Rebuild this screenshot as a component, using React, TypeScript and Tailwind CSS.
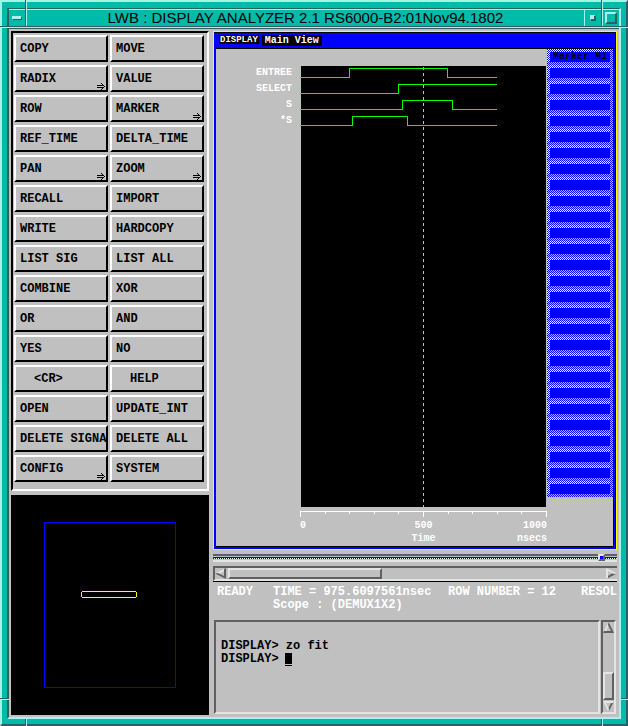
import type { ReactNode } from "react";
import clsx from "clsx";

interface MenuItem {
  label: string;
  more?: boolean;
  indent?: boolean;
}

const menu: MenuItem[] = [
  { label: "COPY" },
  { label: "MOVE" },
  { label: "RADIX", more: true },
  { label: "VALUE" },
  { label: "ROW" },
  { label: "MARKER", more: true },
  { label: "REF_TIME" },
  { label: "DELTA_TIME" },
  { label: "PAN", more: true },
  { label: "ZOOM", more: true },
  { label: "RECALL" },
  { label: "IMPORT" },
  { label: "WRITE" },
  { label: "HARDCOPY" },
  { label: "LIST SIG" },
  { label: "LIST ALL" },
  { label: "COMBINE" },
  { label: "XOR" },
  { label: "OR" },
  { label: "AND" },
  { label: "YES" },
  { label: "NO" },
  { label: "<CR>", indent: true },
  { label: "HELP", indent: true },
  { label: "OPEN" },
  { label: "UPDATE_INT" },
  { label: "DELETE SIGNA" },
  { label: "DELETE ALL" },
  { label: "CONFIG", more: true },
  { label: "SYSTEM" },
];

const signals = [
  { name: "ENTREE", path: "M0 11.5H49.5V2.5H147.5V11.5H197" },
  { name: "SELECT", path: "M0 27.5H98.5V18.5H197" },
  { name: "S", path: "M0 43.5H102.5V34.5H152.5V43.5H197" },
  { name: "*S", path: "M0 59.5H52.5V50.5H107.5V59.5H197" },
];

const markers = ["Marker M1", ...Array<string>(27).fill("")];

const ticks = [25, 49, 74, 98, 148, 172, 197, 221];

// the notches where the resize corners meet the frame
function FrameNotches() {
  return (
    <div aria-hidden="true">
      <i className="absolute -left-[2px] top-[24px] h-[2px] w-[9px] border-t border-[#2f6060] bg-[#a8f2ea]" />
      <i className="absolute -right-[2px] top-[24px] h-[2px] w-[9px] border-t border-[#2f6060] bg-[#a8f2ea]" />
      <i className="absolute -top-[2px] left-[23px] h-[11px] w-[2px] border-l border-[#2f6060] bg-[#a8f2ea]" />
      <i className="absolute -top-[2px] right-[23px] h-[11px] w-[2px] border-l border-[#2f6060] bg-[#a8f2ea]" />
      <i className="absolute -left-[2px] bottom-[24px] h-[2px] w-[9px] border-t border-[#2f6060] bg-[#a8f2ea]" />
      <i className="absolute -right-[2px] bottom-[24px] h-[2px] w-[7px] border-t border-[#2f6060] bg-[#a8f2ea]" />
      <i className="absolute -bottom-[2px] left-[23px] h-[7px] w-[2px] border-l border-[#2f6060] bg-[#a8f2ea]" />
      <i className="absolute -bottom-[2px] right-[23px] h-[7px] w-[2px] border-l border-[#2f6060] bg-[#a8f2ea]" />
    </div>
  );
}

function TitleBar() {
  return (
    <header className="flex h-[20px] items-stretch border-b border-t border-b-[#2f6060] border-t-[#a8f2ea]">
      <div className="flex flex-1 border-b border-[#a8f2ea]">
        <div className="flex flex-1 border-b border-[#2f6060]">
          <button aria-label="Window menu" className="flex w-[17px] items-center justify-center border-r border-[#2f6060]">
            <span className="h-1 w-[10px] border border-b-[#2f6060] border-l-[#a8f2ea] border-r-[#2f6060] border-t-[#a8f2ea] bg-[#a8f2ea]" />
          </button>
          <h1 className="flex flex-1 items-center justify-center overflow-hidden whitespace-nowrap border-l border-[#a8f2ea] font-['Liberation_Sans',sans-serif] text-[15px] leading-4 text-black">
            LWB : DISPLAY ANALYZER 2.1 RS6000-B2:01Nov94.1802
          </h1>
          <button aria-label="Minimize" className="flex w-[18px] items-center justify-center border-l border-r border-l-[#a8f2ea] border-r-[#2f6060]">
            <span className="size-[6px] border-b-2 border-l border-r-2 border-t border-b-[#2f6060] border-l-[#a8f2ea] border-r-[#2f6060] border-t-[#a8f2ea] bg-[#a8f2ea]" />
          </button>
          <button aria-label="Maximize" className="flex w-[17px] items-center justify-center border-l border-[#a8f2ea]">
            <span className="size-3 border-2 border-b-[#2f6060] border-l-[#a8f2ea] border-r-[#2f6060] border-t-[#a8f2ea]" />
          </button>
        </div>
      </div>
    </header>
  );
}

function MenuButton({ label, more, indent }: MenuItem) {
  return (
    <button
      className={clsx(
        "relative flex h-[27px] items-center overflow-hidden whitespace-nowrap border-2 border-b-black border-l-white border-r-black border-t-white pt-px text-left",
        indent ? "pl-[18px]" : "pl-1"
      )}
    >
      {label}
      {more && (
        <svg className="absolute bottom-0 right-0" width="9" height="7" viewBox="0 0 9 7" fill="none" stroke="#000" shapeRendering="crispEdges">
          <path d="M0 2.5H7M0 4.5H7M4.5 0V1M5.5 1V2M6.5 2V3M7.5 3V4M6.5 4V5M5.5 5V6M4.5 6V7" />
        </svg>
      )}
    </button>
  );
}

function MenuPanel() {
  return (
    <nav className="grid grid-cols-2 gap-x-[2px] gap-y-[3px] border-2 border-b-white border-l-black border-r-white border-t-black pb-[7px] pl-px pr-[3px] pt-[2px]">
      {menu.map((item) => (
        <MenuButton key={item.label} {...item} />
      ))}
    </nav>
  );
}

function Overview() {
  return (
    <div className="flex-1 bg-black">
      <svg className="block w-full" viewBox="0 0 198 220" fill="none" shapeRendering="crispEdges">
        <rect x="33.5" y="27.5" width="131" height="165" stroke="#0000ff" />
        <path d="M71 96.5H125M71 102.5H125M70.5 97V102M125.5 97V102" stroke="#ffff00" />
      </svg>
    </div>
  );
}

function Waveforms() {
  return (
    <div className="min-w-0 flex-1 pt-[17px]">
      <svg className="block h-[453px] w-full" viewBox="0 0 247 453" preserveAspectRatio="none" fill="none" shapeRendering="crispEdges">
        <rect x="1" width="245" height="441" fill="#000" />
        <path d="M123.5 1V441" stroke="#c0c0c0" strokeDasharray="3 3" />
        {signals.map((s) => (
          <path key={s.name} d={s.path} stroke="#00ff00" />
        ))}
        <path d="M0.5 451V445.5H246.5V451M123.5 445V451" stroke="#fff" />
        {ticks.map((x) => (
          <path key={x} d={`M${x + 0.5} 445V448`} stroke="#fff" />
        ))}
      </svg>
      <div className="grid grid-cols-3 text-[10px] leading-[13px] text-white">
        <span>0</span>
        <span className="text-center">500</span>
        <span className="text-right">1000</span>
        <span className="col-start-2 text-center">Time</span>
        <span className="text-right">nsecs</span>
      </div>
    </div>
  );
}

function MarkerColumn() {
  return (
    <ul className="w-[66px]">
      {markers.map((marker, i) => (
        <li
          key={i}
          className="h-4 bg-[repeating-conic-gradient(#c0c0c0_0%_25%,#0000ff_25%_50%)] bg-[length:2px_2px] pb-[3px] pr-[3px]"
        >
          <div className="h-[13px] bg-[repeating-conic-gradient(#ffffff_0%_25%,#0000ff_25%_50%)] bg-[length:2px_2px] pl-[3px] pt-[3px]">
            <div className="h-[10px] bg-[#0000ff] text-center text-[10px] leading-[10px] text-black">{marker}</div>
          </div>
        </li>
      ))}
    </ul>
  );
}

function MainView() {
  return (
    <section className="border border-[#ffff00] bg-[#0000ff] font-bold">
      <div className="border-r border-t border-black pb-[2px] pl-[2px] pr-px">
        <div className="flex h-[15px] items-start gap-[3px] pl-[3px] pt-[2px] text-white">
          <span className="h-[9px] bg-black px-px text-[9px] leading-[10px]">DISPLAY</span>
          <h2 className="h-[11px] bg-black px-[3px] text-[10px] leading-[11px]">Main View</h2>
        </div>
        <div className="flex h-[499px] border-b border-r border-t border-black bg-[#c0c0c0]">
          <ul className="w-[76px] pt-4 text-right text-[10px] leading-4 text-white">
            {signals.map((s) => (
              <li key={s.name}>{s.name}</li>
            ))}
          </ul>
          <div className="w-2" />
          <Waveforms />
          <MarkerColumn />
        </div>
      </div>
    </section>
  );
}

function Arrow({ dir, label }: { dir: "up" | "down" | "left" | "right"; label: string }) {
  const shapes: Record<string, ReactNode> = {
    up: (
      <>
        <path d="M5.5 0L0 11H2L5.5 4Z" fill="#e4e4e4" />
        <path d="M5.5 0L11 11H0L1 9H8L5 3Z" fill="#606060" />
      </>
    ),
    down: (
      <>
        <path d="M5.5 11L11 0L9 0L5 8Z" fill="#606060" />
        <path d="M5.5 11L0 0H11L10 2H3L6 8Z" fill="#e4e4e4" />
      </>
    ),
    left: (
      <>
        <path d="M0 5.5L11 0V2L4 6Z" fill="#e4e4e4" />
        <path d="M0 5.5L11 11V0L9 1V8L3 5Z" fill="#606060" />
      </>
    ),
    right: (
      <>
        <path d="M11 5.5L0 11V9L7 5Z" fill="#606060" />
        <path d="M11 5.5L0 0V11L2 10V3L8 6Z" fill="#e4e4e4" />
      </>
    ),
  };
  return (
    <button aria-label={label} className="shrink-0">
      <svg className="block" width="11" height="11" viewBox="0 0 11 11">
        {shapes[dir]}
      </svg>
    </button>
  );
}

function ViewScrollbars() {
  return (
    <>
      <input
        type="range"
        aria-label="View split"
        defaultValue={97}
        className="mt-1 block h-2 w-full appearance-none border-b-2 border-t-2 border-b-[#e4e4e4] border-t-[#606060] bg-[linear-gradient(#0000ff,#0000ff),repeating-linear-gradient(90deg,#0000ff_0_1px,#ffffff_1px_2px)] bg-[length:100%_1px,100%_1px] bg-[position:0_1px,0_2px] bg-no-repeat [&::-webkit-slider-thumb]:-mt-px [&::-webkit-slider-thumb]:size-[7px] [&::-webkit-slider-thumb]:appearance-none [&::-webkit-slider-thumb]:border-2 [&::-webkit-slider-thumb]:border-b-[#606060] [&::-webkit-slider-thumb]:border-l-[#e4e4e4] [&::-webkit-slider-thumb]:border-r-[#606060] [&::-webkit-slider-thumb]:border-t-[#e4e4e4] [&::-webkit-slider-thumb]:bg-[#0000ff]"
      />
      <div className="mt-1 border-b border-black">
        <div className="flex h-[15px] gap-[2px] border-b-2 border-l-2 border-t-2 border-b-[#e4e4e4] border-l-[#606060] border-t-[#606060]">
          <Arrow dir="left" label="Scroll left" />
          <div className="flex-1">
            <div className="h-full w-[41%] border-2 border-b-[#606060] border-l-[#e4e4e4] border-r-[#606060] border-t-[#e4e4e4]" />
          </div>
          <Arrow dir="right" label="Scroll right" />
        </div>
      </div>
    </>
  );
}

function StatusLine() {
  return (
    <div className="mt-1 flex h-[34px] overflow-hidden whitespace-nowrap pl-1 text-[12px] font-bold leading-[13px] text-white">
      <span className="w-14 shrink-0">READY</span>
      <div className="w-[175px] shrink-0">
        <p>TIME = 975.6097561nsec</p>
        <p>Scope : (DEMUX1X2)</p>
      </div>
      <span className="w-[133px] shrink-0">ROW NUMBER = 12</span>
      <span>RESOL</span>
    </div>
  );
}

function Console() {
  return (
    <div className="flex h-[94px] gap-px pl-px pr-px">
      <div className="min-w-0 flex-1 border-2 border-b-[#e4e4e4] border-l-[#606060] border-r-[#e4e4e4] border-t-[#606060] pl-[5px] pt-[18px] text-[12px] font-bold leading-[13px] text-black">
        <p>DISPLAY&gt; zo fit</p>
        <div className="flex">
          <label htmlFor="command" className="w-[64px]">
            DISPLAY&gt;
          </label>
          <span className="flex h-[13px] w-[7px] items-end bg-black pb-px">
            <span className="h-px w-full bg-[#c0c0c0]" />
          </span>
          <input id="command" type="text" className="min-w-0 flex-1 outline-none" />
        </div>
      </div>
      <div className="flex w-[15px] flex-col border-2 border-b-[#e4e4e4] border-l-[#606060] border-r-[#e4e4e4] border-t-[#606060]">
        <Arrow dir="up" label="Scroll up" />
        <div className="flex flex-1 flex-col justify-end py-px">
          <div className="h-7 border-2 border-b-[#606060] border-l-[#e4e4e4] border-r-[#606060] border-t-[#e4e4e4]" />
        </div>
        <Arrow dir="down" label="Scroll down" />
      </div>
    </div>
  );
}

export default function App() {
  return (
    <div className="relative border-2 border-b-[#2f6060] border-l-[#a8f2ea] border-r-[#2f6060] border-t-[#a8f2ea] bg-[#00baaa] px-[5px] pb-[5px] pt-[6px] font-['Liberation_Mono',monospace]">
      <FrameNotches />
      <div className="border-b-2 border-l-2 border-r-2 border-t border-b-[#a8f2ea] border-l-[#2f6060] border-r-[#a8f2ea] border-t-[#2f6060]">
        <TitleBar />
        <div className="flex gap-1 bg-[#c0c0c0] p-[2px]">
          <aside className="flex w-[198px] shrink-0 flex-col gap-1 text-[12px] font-bold leading-[13px] text-black">
            <MenuPanel />
            <Overview />
          </aside>
          <main className="min-w-0 flex-1">
            <MainView />
            <ViewScrollbars />
            <StatusLine />
            <Console />
          </main>
        </div>
      </div>
    </div>
  );
}
